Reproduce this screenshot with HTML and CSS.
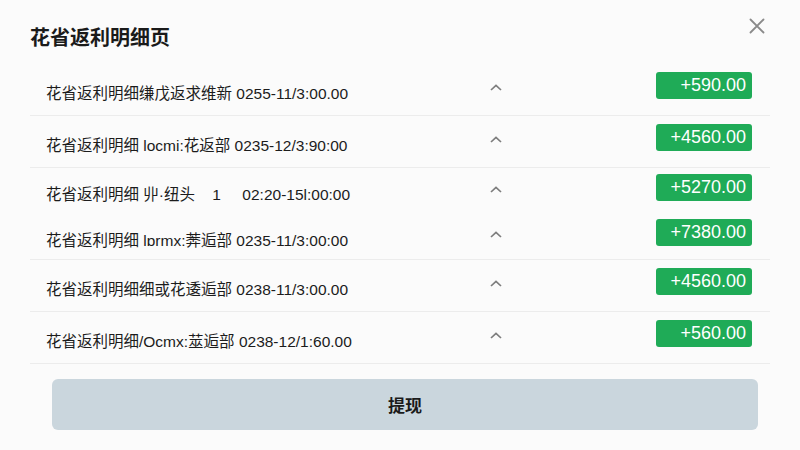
FILE: index.html
```html
<!DOCTYPE html>
<html lang="zh">
<head>
<meta charset="utf-8">
<link rel="stylesheet" href="styles.css">
</head>
<body>
<div class="panel">
  <header class="head">
    <h1 class="title">花省返利明细页</h1>
    <button class="close" aria-label="关闭">
      <svg width="16" height="16" viewBox="0 0 16 16"><path d="M1.5 1.5 14.5 14.5M14.5 1.5 1.5 14.5" stroke="#8a8a8a" stroke-width="1.8" fill="none" stroke-linecap="round"/></svg>
    </button>
  </header>
  <ul class="list">
    <li class="row line"><span class="desc">花省返利明细缣戊返求维新 0255-11/3:00.00</span><span class="chev"><svg width="12" height="7" viewBox="0 0 12 7"><path d="M1 6 6 1.3 11 6" stroke="#7d7d7d" stroke-width="1.7" fill="none"/></svg></span><span class="amt"><span class="badge">+590.00</span></span></li>
    <li class="row line"><span class="desc">花省返利明细 locmi:花返部 0235-12/3:90:00</span><span class="chev"><svg width="12" height="7" viewBox="0 0 12 7"><path d="M1 6 6 1.3 11 6" stroke="#7d7d7d" stroke-width="1.7" fill="none"/></svg></span><span class="amt"><span class="badge">+4560.00</span></span></li>
    <li class="row short"><span class="desc">花省返利明细 丱·纽头&nbsp;&nbsp;&nbsp;&nbsp;1&nbsp;&nbsp;&nbsp;&nbsp;&nbsp;02:20-15l:00:00</span><span class="chev"><svg width="12" height="7" viewBox="0 0 12 7"><path d="M1 6 6 1.3 11 6" stroke="#7d7d7d" stroke-width="1.7" fill="none"/></svg></span><span class="amt"><span class="badge">+5270.00</span></span></li>
    <li class="row line short"><span class="desc">花省返利明细 lɒrmx:莾逅部 0235-11/3:00:00</span><span class="chev"><svg width="12" height="7" viewBox="0 0 12 7"><path d="M1 6 6 1.3 11 6" stroke="#7d7d7d" stroke-width="1.7" fill="none"/></svg></span><span class="amt"><span class="badge">+7380.00</span></span></li>
    <li class="row line"><span class="desc">花省返利明细细或花逶逅部 0238-11/3:00.00</span><span class="chev"><svg width="12" height="7" viewBox="0 0 12 7"><path d="M1 6 6 1.3 11 6" stroke="#7d7d7d" stroke-width="1.7" fill="none"/></svg></span><span class="amt"><span class="badge">+4560.00</span></span></li>
    <li class="row line"><span class="desc">花省返利明细/Ocmx:莁逅部 0238-12/1:60.00</span><span class="chev"><svg width="12" height="7" viewBox="0 0 12 7"><path d="M1 6 6 1.3 11 6" stroke="#7d7d7d" stroke-width="1.7" fill="none"/></svg></span><span class="amt"><span class="badge">+560.00</span></span></li>
  </ul>
  <div class="foot">
    <button class="withdraw">提现</button>
  </div>
</div>
</body>
</html>
```
FILE: styles.css
```css
* { box-sizing: border-box; }
html, body { margin: 0; padding: 0; }
body {
  width: 800px;
  height: 450px;
  overflow: hidden;
  background: #fbfbfb;
  font-family: "Liberation Sans", "Noto Sans CJK SC", sans-serif;
  color: #1e1e1e;
}
.panel {
  height: 450px;
  padding: 12px 30px 0 30px;
  display: flex;
  flex-direction: column;
}
.head {
  display: flex;
  justify-content: space-between;
  align-items: flex-start;
  height: 52px;
}
.title {
  margin: 12px 0 0 0;
  font-size: 20px;
  font-weight: 700;
  line-height: 28px;
  color: #1a1a1a;
}
.close {
  border: 0;
  background: none;
  padding: 0;
  margin: 6px 5px 0 0;
  width: 16px;
  height: 16px;
  display: flex;
}
.list {
  list-style: none;
  margin: 0;
  padding: 0;
}
.row {
  display: grid;
  grid-template-columns: 415px 70px 1fr;
  align-items: center;
  height: 52px;
  padding: 0 18px 0 16px;
}
.row.short { height: 46px; }
.row.line { border-bottom: 1px solid #ececec; }
.desc {
  font-size: 15.5px;
  color: #1c1c1c;
  white-space: nowrap;
  padding-top: 4px;
}
.chev {
  display: flex;
  justify-content: center;
  padding-bottom: 4px;
}
.amt {
  display: flex;
  justify-content: flex-end;
}
.badge {
  display: inline-block;
  width: 96px;
  height: 27px;
  line-height: 27px;
  margin-bottom: 8px;
  background: #1fab57;
  color: #fff;
  font-size: 18px;
  text-align: right;
  padding-right: 6px;
  border-radius: 3px;
}
.foot {
  padding: 15px 12px 0 22px;
}
.withdraw {
  width: 100%;
  height: 51px;
  border: 0;
  border-radius: 6px;
  background: #cad6dd;
  font-family: "Liberation Sans", "Noto Sans CJK SC", sans-serif;
  font-size: 17px;
  font-weight: 700;
  color: #1a1a1a;
}
```
